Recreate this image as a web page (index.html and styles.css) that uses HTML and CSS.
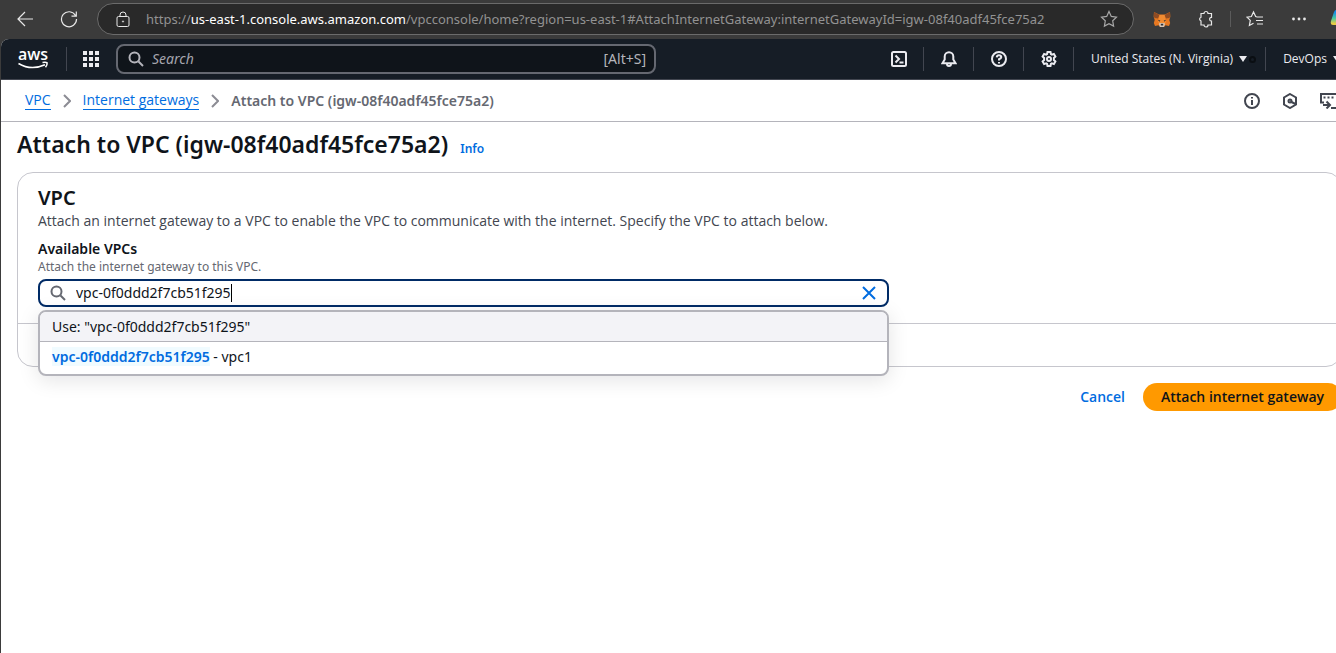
FILE: index.html
```
<!DOCTYPE html>
<html lang="en">
<head>
<meta charset="utf-8">
<title>Attach to VPC</title>
<link rel="stylesheet" href="styles.css">
</head>
<body>
<div class="browser">
  <button class="tool back" aria-label="Back"><svg width="18" height="18" viewBox="0 0 18 18"><path d="M17 9H2M9 2 2 9l7 7"/></svg></button>
  <button class="tool reload" aria-label="Reload"><svg width="18" height="18" viewBox="0 0 18 18"><path d="M15.500 5.500A7.500 7.500 0 1 0 16.500 9M16.300 1.500v4.700h-4.800"/></svg></button>
  <div class="omnibox">
    <svg class="lock" width="14" height="17" viewBox="0 0 14 17"><rect x="1" y="5.500" width="12" height="10" rx="1.500"/><path d="M4 5.500V4a3 3 0 0 1 6 0v1.500"/><circle cx="7" cy="10.500" r=".6"/></svg>
    <span class="url">https://<b>us-east-1.console.aws.amazon.com</b>/vpcconsole/home?region=us-east-1#AttachInternetGateway:internetGatewayId=igw-08f40adf45fce75a2</span>
    <button class="tool star" aria-label="Add to favorites"><svg width="18" height="18" viewBox="0 0 18 18"><path d="m9 1.500 2.300 4.900 5.200.7-3.800 3.700.9 5.300L9 13.600l-4.600 2.500.9-5.300L1.500 7.100l5.200-.7z"/></svg></button>
  </div>
  <div class="extensions">
    <button class="tool" aria-label="Wallet extension"><svg class="fox" width="18" height="18" viewBox="0 0 18 18"><path fill="#e77821" d="m1 2 5 2.500h6L17 2l.3 5-1 3 .9 3-1.200 3-3.500-.8L11 17H7l-1.500-1.800L2 16l-1.200-3 .9-3-1-3z"/><path fill="#8f4c24" d="m1 2 5.500 3L5 8.500 1.500 8 .8 6zM17 2l-5.500 3L13 8.500l3.500-.5.700-2z"/><path fill="#f18b31" d="M6.500 5h5L13 12l-2.500 3h-3L5 12z"/><path fill="#2b3038" d="m4.700 9.800 2.600.8-.7 1.200zM13.300 9.800l-2.600.8.7 1.200z"/><path fill="#d6c5b5" d="m5.800 13.500 2-.5h2.400l2 .5L11 17H7z"/><path fill="#2b3038" d="M7.800 13.800h2.400v1.700H7.800z"/></svg></button>
    <button class="tool" aria-label="Extensions"><svg width="18" height="18" viewBox="0 0 18 18"><path d="M4 3.500h3A2 2 0 0 1 11 3.500h3.500v3.800a1.900 1.900 0 0 0 0 3.800V15H11a2 2 0 0 1-4 0H4v-4a2 2 0 0 1 0-3.800z"/></svg></button>
    <span class="split"></span>
    <button class="tool" aria-label="Favorites"><svg width="18" height="18" viewBox="0 0 18 18"><path d="M11 7 9.700 6.500 7.500 2 5.400 6.500 1 7.100l3.300 3.300-.9 5.100 4.100-2.200M11 7h6M10 10.500h7M11 14h6"/></svg></button>
    <button class="tool" aria-label="More"><svg class="solid" width="18" height="18" viewBox="0 0 18 18"><circle cx="3.500" cy="9" r="1.400"/><circle cx="9" cy="9" r="1.400"/><circle cx="14.500" cy="9" r="1.400"/></svg></button>
    <button class="tool copilot" aria-label="Copilot"><svg width="20" height="20" viewBox="0 0 20 20"><defs><linearGradient id="pilot" x1="0" y1="0" x2="0" y2="1"><stop offset=".15" stop-color="#168be8"/><stop offset=".55" stop-color="#49c8a0"/><stop offset=".9" stop-color="#e8cc45"/></linearGradient></defs><path d="M6 1h10v15H3q-3 0-2-4L4 3q1-2 2-2" fill="url(#pilot)" stroke="none"/></svg></button>
  </div>
</div>

<div class="page">
  <header class="console">
    <a class="logo" href="#" aria-label="AWS home"><svg width="34" height="24" viewBox="0 0 34 24"><text x="16" y="13" text-anchor="middle">aws</text><path d="M1.500 16.500Q14 24 28 17.800"/><path d="M25.500 15.600q3.300-.7 4.600.2.300 2.200-1.600 4.500"/></svg></a>
    <button class="apps" aria-label="Services"><svg width="16" height="16" viewBox="0 0 16 16"><path d="M0 0h4v4H0zM6 0h4v4H6zM12 0h4v4h-4zM0 6h4v4H0zM6 6h4v4H6zM12 6h4v4h-4zM0 12h4v4H0zM6 12h4v4H6zM12 12h4v4h-4z"/></svg></button>
    <label class="search">
      <svg class="icon" width="16" height="16" viewBox="0 0 16 16"><circle cx="6.500" cy="6.500" r="5"/><path d="m10.500 10.500 4.500 4.500"/></svg>
      <input type="search" placeholder="Search" aria-label="Search">
      <span>[Alt+S]</span>
    </label>
    <nav class="utilities">
      <button aria-label="CloudShell"><svg class="icon" width="16" height="16" viewBox="0 0 16 16"><rect x="1" y="1" width="14" height="14" rx="1.500"/><path d="m4.500 4.500 3.500 3.500-3.500 3.500M8.500 11.500h4"/></svg></button>
      <button aria-label="Notifications"><svg class="icon" width="16" height="16" viewBox="0 0 16 16"><path d="M3.700 8.500V5.500a4.300 4.300 0 0 1 8.600 0v3l2.200 3.700h-13zM6 13a2 2 0 0 0 4 0"/></svg></button>
      <button aria-label="Help"><svg class="icon" width="16" height="16" viewBox="0 0 16 16"><circle cx="8" cy="8" r="7"/><path d="M5.700 6.300Q5.900 4.300 8 4.300t2.300 1.900Q10.200 7.400 8 8.200v1.300M8 11v1.500"/></svg></button>
      <button aria-label="Settings"><svg class="icon" width="16" height="16" viewBox="0 0 16 16"><path d="M6.500 1h3l.4 2 1 .6 2-.7 1.500 2.600L12.900 7v2l1.500 1.500-1.500 2.600-2-.7-1 .6-.4 2h-3l-.4-2-1-.6-2 .7-1.500-2.600L3.100 9V7L1.600 5.500l1.500-2.600 2 .7 1-.6z"/><circle cx="8" cy="8" r="2"/></svg></button>
      <button class="menu region">United States (N. Virginia) <i class="down"></i><i class="ring"></i></button>
      <button class="menu">DevOps <i class="down"></i></button>
    </nav>
  </header>

  <div class="crumbbar">
    <nav class="crumbs" aria-label="Breadcrumbs">
      <a href="#">VPC</a>
      <svg width="8" height="14" viewBox="0 0 8 14"><path d="m1 1 6 6-6 6"/></svg>
      <a href="#">Internet gateways</a>
      <svg width="8" height="14" viewBox="0 0 8 14"><path d="m1 1 6 6-6 6"/></svg>
      <span>Attach to VPC (igw-08f40adf45fce75a2)</span>
    </nav>
    <div class="panels">
      <button aria-label="Info"><svg class="icon" width="16" height="16" viewBox="0 0 16 16"><circle cx="8" cy="8" r="7"/><path d="M8 7v5M8 4v1.600"/></svg></button>
      <button aria-label="Resources"><svg class="icon" width="16" height="16" viewBox="0 0 16 16"><path d="m8 1 6 3.500v7L8 15l-6-3.500v-7z"/><circle cx="8" cy="8" r="1.500"/><path d="m8.500 8.500 5 2.500"/></svg></button>
      <button aria-label="Tutorials"><svg class="icon" width="18" height="16" viewBox="0 0 18 16"><path d="M4 9.500H1V1h16v8M3.500 4.500h2M7.500 4.500h2M11.500 4.500h2M3 12h6M6.500 8.500 10 12l-3.500 3.500M11 15h7"/></svg></button>
    </div>
  </div>

  <main class="content">
    <div class="title"><h1>Attach to VPC (igw-08f40adf45fce75a2)</h1><a href="#">Info</a></div>
    <form class="form">
      <section class="card">
        <div class="body">
          <h2>VPC</h2>
          <p class="lead">Attach an internet gateway to a VPC to enable the VPC to communicate with the internet. Specify the VPC to attach below.</p>
          <label class="name" for="vpc">Available VPCs</label>
          <p class="hint" id="hint">Attach the internet gateway to this VPC.</p>
          <div class="picker">
            <div class="field">
              <svg class="icon" width="16" height="16" viewBox="0 0 16 16"><circle cx="6.500" cy="6.500" r="5"/><path d="m10.500 10.500 4.500 4.500"/></svg>
              <input id="vpc" type="text" value="vpc-0f0ddd2f7cb51f295" aria-describedby="hint"><span class="caret"></span>
              <button type="button" class="clear" aria-label="Clear"><svg width="14" height="14" viewBox="0 0 14 14"><path d="m1 1 12 12M13 1 1 13"/></svg></button>
            </div>
            <ul class="options" role="listbox">
              <li class="use" role="option">Use: "vpc-0f0ddd2f7cb51f295"</li>
              <li role="option"><mark>vpc-0f0ddd2f7cb51f295</mark> - vpc1</li>
            </ul>
          </div>
        </div>
        <div class="cardfoot"></div>
      </section>
      <div class="actions">
        <button type="button" class="cancel">Cancel</button>
        <button type="button" class="primary">Attach internet gateway</button>
      </div>
    </form>
  </main>
</div>
</body>
</html>
```

FILE: styles.css
```
* { box-sizing: border-box; }
body { margin: 0; min-height: 100vh; display: flex; flex-direction: column; overflow: hidden; background: #3b3b3b; color: #0f141a; font: 14px/20px "Noto Sans", "Open Sans", sans-serif; }
button, input { font: inherit; color: inherit; background: none; border: 0; padding: 0; margin: 0; outline: 0; }
button { flex: none; display: inline-flex; align-items: center; justify-content: center; }
svg { display: block; flex: none; fill: none; stroke: currentColor; }
.icon { stroke-width: 2; }
h1, h2, p, ul { margin: 0; padding: 0; }

.browser { display: flex; align-items: center; height: 39px; padding: 0 0 1px 16px; color: #e8e8e8; }
.tool { width: 18px; height: 18px; }
.tool svg { stroke-width: 1.2; }
.reload { margin: 0 19px 0 26px; }
.omnibox { flex: none; width: calc(100% - 283px); height: 32px; display: flex; align-items: center; padding: 0 15px 0 18px; border: 1px solid #6b6b6b; border-radius: 16px; background: #292929; }
.url { flex: 1; margin-left: 16px; white-space: nowrap; color: #929292; font-size: 13px; }
.url b { font-weight: 400; color: #fff; }
.star { color: #a8a8a8; }
.extensions { flex: none; display: flex; align-items: center; gap: 26px; margin-left: 19px; }
.split { width: 1px; height: 16px; margin: 0 -11px; background: #5b5b5b; }
.copilot { width: 20px; margin-left: -4px; }
.tool .fox { stroke: none; }
.tool .solid { fill: currentColor; stroke: none; }

.page { flex: 1; margin-left: 1px; border-top-left-radius: 8px; background: #fff; overflow: hidden; }
.console { display: flex; align-items: center; height: 41px; padding-left: 16px; border-bottom: 1px solid #424650; background: #161d26; color: #ebebf0; font-size: 12px; }
.logo { flex: none; width: 50px; height: 24px; border-right: 1px solid #424650; color: #fff; }
.logo svg { overflow: visible; stroke-width: 1.500; }
.logo text { font: 600 16px "Open Sans", sans-serif; fill: #fff; stroke: none; }
.apps { margin: 0 17px 0 16px; }
.apps svg { fill: currentColor; stroke: none; }
.search { flex: none; width: 540px; height: 30px; display: flex; align-items: center; gap: 8px; padding: 0 8px 0 10px; border: 2px solid #656871; border-radius: 8px; background: #0f141a; color: #b4b4bb; font-size: 14px; }
.search input { flex: 1; min-width: 0; }
.search input::placeholder { color: #a4a4ad; font-style: italic; opacity: 1; }
.utilities { flex: none; display: flex; align-items: center; margin-left: auto; margin-right: -22px; }
.utilities button { height: 24px; padding: 0 16px 0 17px; border-left: 1px solid #424650; white-space: nowrap; }
.utilities button:first-child { border: 0; }
.utilities .menu { gap: 6px; padding-right: 17px; font: 500 12px/20px "Open Sans", sans-serif; }
.utilities .region { padding-right: 9px; }
.down { border: 4px solid transparent; border-top: 6px solid #ebebf0; border-bottom: 0; }
.ring { width: 7px; height: 7px; margin-left: -4px; border: 2px solid #0a0e12; border-radius: 50%; }

.crumbbar { display: flex; align-items: center; justify-content: space-between; height: 42px; padding-left: 24px; border-bottom: 1px solid #b4b4bb; }
.crumbs { display: flex; align-items: center; gap: 12px; line-height: 18px; white-space: nowrap; }
.crumbs a { font-family: "Open Sans", sans-serif; color: #006ce0; text-decoration: none; border-bottom: 1px solid; }
.crumbs svg { color: #8c8c94; stroke-width: 2; }
.crumbs span { font-weight: 600; color: #656871; }
.panels { display: flex; gap: 22px; margin-right: -2px; color: #424650; }

.content { margin-right: -6px; padding: 8px 0 0 16px; }
.title { display: flex; align-items: baseline; gap: 12px; height: 42px; }
.title h1 { font-size: 23px; line-height: 28px; font-weight: 600; white-space: nowrap; }
.title a { font-size: 12px; font-weight: 600; color: #006ce0; text-decoration: none; }
.card { border: 1px solid #c6c6cd; border-radius: 16px; }
.body { padding: 13px 20px 16px; }
h2 { font-size: 20px; line-height: 24px; font-weight: 600; }
.lead { padding-top: 1px; color: #424650; font-family: "Open Sans", sans-serif; white-space: nowrap; }
.name { display: block; margin-top: 8px; font-weight: 600; }
.hint { font-size: 12px; line-height: 16px; color: #656871; }
.picker { position: relative; width: 66.3%; margin-top: 4px; }
.field { display: flex; align-items: center; height: 28px; padding: 0 11px 0 10px; border: 2px solid #002b66; border-radius: 8px; background: #fff; }
.field .icon { color: #656871; margin-right: 10px; }
.field input { field-sizing: content; height: 20px; }
.caret { width: 1px; height: 18px; background: #000; }
.clear { margin-left: auto; color: #006ce0; }
.clear svg { stroke-width: 2; }
.options { position: absolute; top: calc(100% + 3px); left: 0; right: 0; z-index: 2; list-style: none; overflow: hidden; border: 2px solid #b4b4bb; border-radius: 8px; background: #fff; box-shadow: 0 4px 20px 1px rgba(0, 7, 22, .1); }
.options li { padding: 5px 12px 7px; }
.options .use { padding-bottom: 4px; border-bottom: 1px solid #b4b4bb; background: #f3f3f7; }
.options mark { background: #f0fbff; color: #006ce0; font-weight: 600; }
.cardfoot { height: 43px; border-top: 1px solid #c6c6cd; }
.actions { display: flex; align-items: center; justify-content: flex-end; gap: 18px; margin-top: 16px; font-family: "Open Sans", sans-serif; }
.actions button { height: 28px; font-weight: 600; }
.cancel { color: #006ce0; }
.primary { padding: 0 18px; border-radius: 14px; background: #f90; }
```
